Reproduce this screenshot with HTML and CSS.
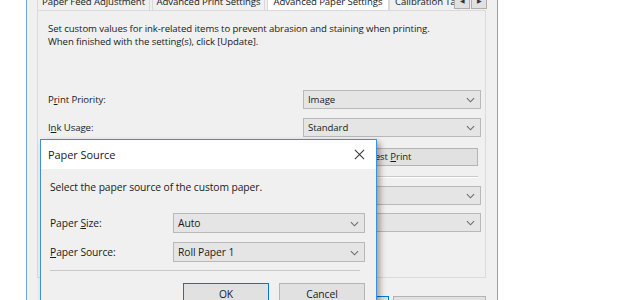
FILE: index.html
```html
<!DOCTYPE html>
<html lang="en">
<head>
  <meta charset="UTF-8" />
  <title>Advanced Paper Settings</title>
  <link rel="stylesheet" href="styles.css">
</head>
<body>
  <div class="window">
    <div class="tabs">
      <div class="tab t1">Paper Feed Adjustment</div>
      <div class="tab t2">Advanced Print Settings</div>
      <div class="tab active">Advanced Paper Settings</div>
      <div class="tab last">Calibration Tab</div>
      <div class="tab-arrows">
        <span class="arrow">&#9664;</span>
        <span class="arrow">&#9654;</span>
      </div>
    </div>

    <div class="panel">
      <p class="intro">
        Set custom values for ink-related items to prevent abrasion and staining when printing.<br>
        When finished with the setting(s), click [Update].
      </p>

      <div class="row first">
        <span class="label">P<u>r</u>int Priority:</span>
        <div class="select">Image<svg class="chev" viewBox="0 0 10 6"><path d="M1 1 L5 5 L9 1" /></svg></div>
      </div>
      <div class="row">
        <span class="label">I<u>n</u>k Usage:</span>
        <div class="select">Standard<svg class="chev" viewBox="0 0 10 6"><path d="M1 1 L5 5 L9 1" /></svg></div>
      </div>
      <div class="row btn-row">
        <span class="label"></span>
        <div class="button wide">Test <u>P</u>rint</div>
      </div>
      <div class="sep"></div>
      <div class="row tight">
        <span class="label"></span>
        <div class="select"><svg class="chev" viewBox="0 0 10 6"><path d="M1 1 L5 5 L9 1" /></svg></div>
      </div>
      <div class="row tight">
        <span class="label"></span>
        <div class="select"><svg class="chev" viewBox="0 0 10 6"><path d="M1 1 L5 5 L9 1" /></svg></div>
      </div>
    </div>

    <div class="footer">
      <div class="button focus"></div>
      <div class="button"></div>
    </div>
  </div>

  <!-- Paper Source dialog, on top of the settings page -->
  <div class="dialog">
    <div class="dialog-title">
      <span>Paper Source</span>
      <svg class="close" viewBox="0 0 12 12"><path d="M1 1 L11 11 M11 1 L1 11" /></svg>
    </div>
    <div class="dialog-body">
      <p class="dialog-text">Select the paper source of the custom paper.</p>
      <div class="drow top">
        <span class="dlabel">Paper <u>S</u>ize:</span>
        <div class="select dsel">Auto<svg class="chev" viewBox="0 0 10 6"><path d="M1 1 L5 5 L9 1" /></svg></div>
      </div>
      <div class="drow">
        <span class="dlabel"><u>P</u>aper Source:</span>
        <div class="select dsel">Roll Paper 1<svg class="chev" viewBox="0 0 10 6"><path d="M1 1 L5 5 L9 1" /></svg></div>
      </div>
      <div class="dsep"></div>
      <div class="dbuttons">
        <div class="button dbtn ok">OK</div>
        <div class="button dbtn">Cancel</div>
      </div>
    </div>
  </div>
</body>
</html>
```

FILE: styles.css
```css
html, body {
  margin: 0;
  padding: 0;
  background: #fff;
  font-family: 'Open Sans', 'Noto Sans', sans-serif;
  font-size: 9.6px;
  letter-spacing: -0.08px;
  color: #1a1a1a;
  overflow: hidden;
  height: 300px;
}

u {
  text-decoration-thickness: 1px;
  text-underline-offset: 1px;
}

.window {
  margin-left: 26px;
  width: 470px;
  height: 300px;
  background: #f0f0f0;
  border-left: 1px solid #6ea8e0;
  border-right: 1px solid #6ea8e0;
}

.tabs {
  display: flex;
  height: 10px;
  padding-left: 10px;
  position: relative;
}

.tab {
  margin-top: -6px;
  height: 16px;
  line-height: 14px;
  border: 1px solid #d9d9d9;
  border-bottom: none;
  margin-right: 2px;
  white-space: nowrap;
  text-align: center;
  box-sizing: border-box;
}

.tab.t1,
.tab.t2 {
  width: 113px;
}

.tab.active {
  width: 122px;
  background: #fff;
  margin-right: 0;
}

.tab.last {
  width: 70px;
  padding-left: 5px;
  text-align: left;
  overflow: hidden;
}

.tab-arrows {
  position: absolute;
  right: 10px;
  top: -6px;
  display: flex;
  gap: 1px;
}

.arrow {
  width: 14px;
  height: 13px;
  background: #e1e1e1;
  border: 1px solid #adadad;
  font-size: 6px;
  line-height: 13px;
  text-align: center;
  color: #333;
}

.panel {
  margin-left: 10px;
  width: 437px;
  height: 266px;
  border: 1px solid #dadada;
  background: #f0f0f0;
  padding-left: 10px;
}

.intro {
  margin: 11px 0 0;
  line-height: 13px;
}

.row {
  display: flex;
  align-items: center;
  height: 19px;
  margin-top: 9px;
}

.row.first {
  margin-top: 42px;
}

.row.btn-row {
  height: 18px;
  margin-top: 11px;
}

.row.tight {
  margin-top: 8px;
}

.label {
  width: 255px;
}

.select {
  position: relative;
  box-sizing: border-box;
  width: 178px;
  height: 19px;
  line-height: 17px;
  padding-left: 4px;
  background: #e5e5e5;
  border: 1px solid #b8b8b8;
}

.chev {
  position: absolute;
  right: 5px;
  top: 6px;
  width: 9px;
  height: 6px;
  fill: none;
  stroke: #6a6a6a;
  stroke-width: 1.2;
}

.button {
  box-sizing: border-box;
  height: 18px;
  line-height: 16px;
  text-align: center;
  background: #e1e1e1;
  border: 1px solid #b4b4b4;
}

.button.wide {
  width: 175px;
}

.sep {
  margin-top: 10px;
  width: 430px;
  border-top: 1px solid #c9c9c9;
  border-bottom: 1px solid #fff;
}

.footer {
  display: flex;
  justify-content: flex-end;
  gap: 4px;
  margin-top: 18px;
  margin-right: 11px;
}

.footer .button {
  width: 93px;
  height: 20px;
}

.footer .button.focus {
  border-color: #0078d7;
}

/* dialog */
.dialog {
  position: absolute;
  left: 40px;
  top: 139px;
  width: 337px;
  height: 180px;
  box-sizing: border-box;
  border: 1px solid #3d8fdb;
  background: #f0f0f0;
  box-shadow: 3px 3px 6px rgba(0, 0, 0, 0.35);
}

.dialog-title {
  display: flex;
  justify-content: space-between;
  align-items: center;
  height: 29px;
  background: #fff;
  padding: 0 11px 0 7px;
  font-size: 11px;
}

.close {
  width: 11px;
  height: 11px;
  fill: none;
  stroke: #333;
  stroke-width: 1.1;
}

.dialog-body {
  padding-left: 9px;
}

.dialog-text {
  margin: 11px 0 0;
  font-size: 10.3px;
  line-height: 14px;
}

.drow {
  display: flex;
  align-items: center;
  height: 20px;
  margin-top: 9px;
}

.drow.top {
  margin-top: 19px;
}

.dlabel {
  width: 123px;
  font-size: 10.3px;
}

.dsel {
  width: 192px;
  height: 20px;
  line-height: 18px;
  font-size: 10.3px;
}

.dsel .chev {
  top: 7px;
}

.dsep {
  margin-top: 8px;
  width: 310px;
  border-top: 1px solid #c9c9c9;
}

.dbuttons {
  display: flex;
  gap: 10px;
  margin-top: 12px;
  margin-left: 133px;
}

.dbtn {
  width: 86px;
  height: 22px;
  line-height: 20px;
  font-size: 10.3px;
}

.dbtn.ok {
  border: 1px solid #0078d7;
}
```
